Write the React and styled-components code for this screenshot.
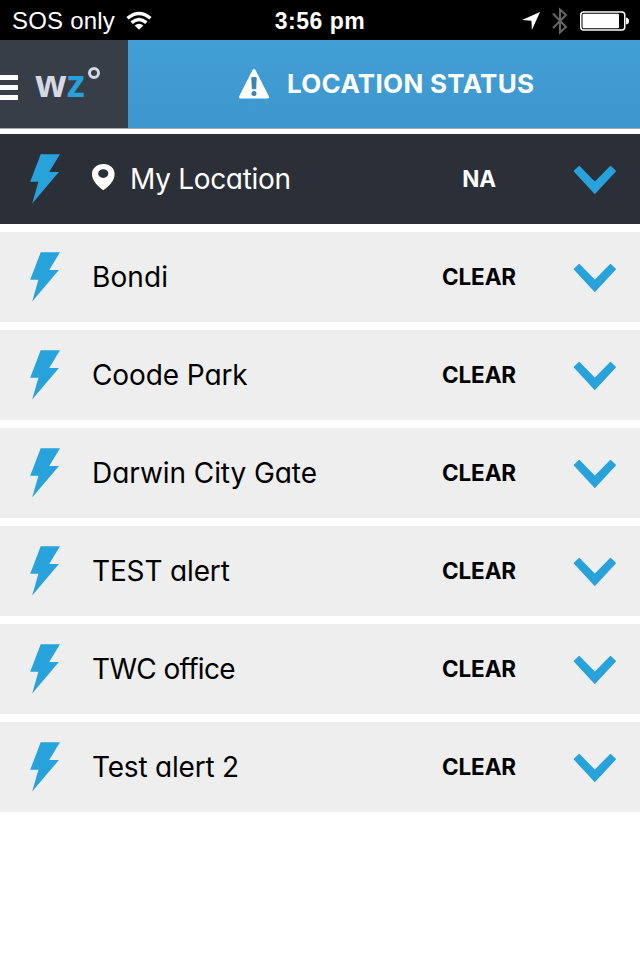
import React from "react";
import styled, { createGlobalStyle } from "styled-components";

const GlobalStyle = createGlobalStyle`
  * { box-sizing: border-box; }
  html, body { margin: 0; background: #fff; }
  svg { display: block; flex: none; }
`;

const Screen = styled.div`
  display: flex;
  flex-direction: column;
  width: 640px;
  height: 960px;
  overflow: hidden;
  background: #fff;
  font-family: Inter, "Liberation Sans", sans-serif;
`;

const StatusBar = styled.header`
  display: grid;
  grid-template-columns: 240px 160px 240px;
  align-items: center;
  height: 40px;
  background: #000;
  color: #fff;
  font-family: "Liberation Sans", sans-serif;
  font-size: 24px;
  line-height: 40px;
  white-space: nowrap;
`;

const Carrier = styled.div`
  display: flex;
  align-items: center;
  gap: 11px;
  padding-left: 12px;
  padding-top: 1px;
  letter-spacing: 0.2px;
`;

const Clock = styled.div`
  padding-top: 1px;
  text-align: center;
  font-weight: 700;
  font-size: 23px;
  letter-spacing: 0.5px;
`;

const Indicators = styled.div`
  display: flex;
  align-items: center;
  justify-content: flex-end;
  padding-right: 10px;
`;

const NavBar = styled.nav`
  display: flex;
  height: 94px;
  background: linear-gradient(#aaa, #aaa) 0 88px / 100% 1px no-repeat;
`;

const MenuButton = styled.div`
  display: flex;
  align-items: flex-start;
  width: 128px;
  height: 88px;
  background: #383e48;
`;

const MenuBars = styled.div`
  display: flex;
  flex-direction: column;
  gap: 5px;
  width: 18px;
  margin-top: 35px;
`;

const MenuBar = styled.span`
  height: 5px;
  background: #fff;
`;

const Logo = styled.div`
  display: flex;
  margin-left: 17px;
  color: #d5d9e6;
  font-family: "Open Sans", sans-serif;
  font-size: 37px;
  font-weight: 700;
  line-height: 50px;
  padding-top: 18px;
  letter-spacing: -1px;
`;

const LogoAccent = styled.span`
  margin-left: 1px;
  color: #27a2db;
`;

const LogoRing = styled.span`
  width: 12px;
  height: 12px;
  margin: 9px 0 0 4px;
  border: 3px solid #d5d9e6;
  border-radius: 50%;
`;

const TitleBar = styled.div`
  display: flex;
  flex: 1;
  height: 88px;
  padding: 28px 0 0 110px;
  background: linear-gradient(#429fd5, #3c97cd);
  color: #fff;
`;

const Title = styled.h1`
  margin: 0 0 0 17px;
  font-size: 26px;
  font-weight: 700;
  line-height: 32px;
  letter-spacing: 0.3px;
  white-space: nowrap;
`;

const List = styled.main`
  display: flex;
  flex-direction: column;
  gap: 8px;
`;

const Row = styled.div`
  display: grid;
  grid-template-columns: 92px 316px 142px 90px;
  height: 90px;
  background: ${(p) => (p.$current ? "#2b2f38" : "#eee")};
  color: ${(p) => (p.$current ? "#fff" : "#000")};
`;

const Place = styled.div`
  display: flex;
  align-items: flex-start;
  gap: 15px;
  white-space: nowrap;
`;

const PinSlot = styled.span`
  margin-top: 30px;
`;

const PlaceName = styled.span`
  font-size: 28px;
  font-weight: 400;
  line-height: 90px;
  letter-spacing: ${(p) => p.$tracking}px;
  font-feature-settings: "cv11" 1;
`;

const State = styled.div`
  padding-top: 1px;
  text-align: center;
  font-size: 22.5px;
  font-weight: 700;
  line-height: 88px;
  letter-spacing: -0.1px;
`;

const Wifi = () => (
  <svg width="26" height="20" viewBox="0 0 26 20" fill="none" stroke="#fff" strokeWidth="3.4">
    <path d="M1.5 7.2Q13-2.4 24.5 7.2" />
    <path d="M5.6 11.6Q13 5.2 20.4 11.6" />
    <path d="M13 18.8L8.6 14.6Q13 11 17.4 14.6Z" fill="#fff" stroke="none" />
  </svg>
);

const Arrow = () => (
  <svg width="18" height="18" viewBox="0 0 18 18">
    <path d="M18 0L9.9 18L9.4 8.7L0 8Z" fill="#fff" />
  </svg>
);

const BluetoothBox = styled.div`
  margin: 0 12px 0 12px;
`;

const Bluetooth = () => (
  <svg width="16" height="28" viewBox="0 0 16 28" fill="none" stroke="#666" strokeWidth="2">
    <path d="M1 6.5L14 20L8 25.5V2.5L14 8L1 21" />
  </svg>
);

const Battery = () => (
  <svg width="50" height="20" viewBox="0 0 50 20">
    <rect x="0.75" y="1" width="44" height="18" rx="3" fill="none" stroke="#fff" strokeWidth="1.5" />
    <rect x="2.5" y="2.7" width="36.5" height="14.6" rx="1" fill="#fff" />
    <path d="M46 6.5Q49 7 49 10T46 13.5Z" fill="#fff" />
  </svg>
);

const Warning = () => (
  <svg width="32" height="32" viewBox="0 0 32 32">
    <path d="M16 2.5L29.5 29H2.5Z" fill="#fff" stroke="#fff" strokeWidth="3" strokeLinejoin="round" />
    <path d="M13.8 9.6H18.2L17.7 20.8H14.3Z" fill="#3c83b2" stroke="#3c83b2" strokeWidth="1" />
    <circle cx="16" cy="25.5" r="2.5" fill="#3c83b2" />
  </svg>
);

const Bolt = () => (
  <svg width="92" height="90" viewBox="0 0 92 90">
    <path d="M40.7 20.3H60L49.2 38H58.9L32.2 69.5L38.4 47.8H30.2Z" fill="#27a2db" />
  </svg>
);

const Pin = () => (
  <svg width="23" height="27" viewBox="0 0 23 27">
    <path
      d="M11.5 0C4.7 0 0 4.3 0 10.2C0 17 6 22 11.3 26.3C16.8 22 22.6 17 22.6 10.2C22.6 4.3 18.2 0 11.5 0ZM11.3 5.3C14.3 5.3 16.3 7.2 16.3 9.6S14.3 13.9 11.3 13.9S6.2 12 6.2 9.6S8.2 5.3 11.3 5.3Z"
      fill="#fff"
      fillRule="evenodd"
    />
  </svg>
);

const Chevron = () => (
  <svg width="90" height="90" viewBox="0 0 90 90">
    <path
      d="M29.2 32.8L44.8 48.8L60.5 32.8L65 37.2L44.8 59L24.7 37.2Z"
      fill="#27a2db"
      stroke="#27a2db"
      strokeWidth="1.8"
      strokeLinejoin="round"
    />
  </svg>
);

const places = [
  { name: "My Location", state: "NA", current: true, tracking: -0.3 },
  { name: "Bondi", state: "CLEAR", tracking: 0.1 },
  { name: "Coode Park", state: "CLEAR", tracking: -0.1 },
  { name: "Darwin City Gate", state: "CLEAR", tracking: -0.07 },
  { name: "TEST alert", state: "CLEAR", tracking: -0.15 },
  { name: "TWC office", state: "CLEAR", tracking: -0.65 },
  { name: "Test alert 2", state: "CLEAR", tracking: -0.2 },
];

export default function App() {
  return (
    <Screen>
      <GlobalStyle />
      <StatusBar>
        <Carrier>
          SOS only
          <Wifi />
        </Carrier>
        <Clock>3:56 pm</Clock>
        <Indicators>
          <Arrow />
          <BluetoothBox>
            <Bluetooth />
          </BluetoothBox>
          <Battery />
        </Indicators>
      </StatusBar>
      <NavBar>
        <MenuButton>
          <MenuBars>
            <MenuBar />
            <MenuBar />
            <MenuBar />
          </MenuBars>
          <Logo>
            w<LogoAccent>z</LogoAccent>
            <LogoRing />
          </Logo>
        </MenuButton>
        <TitleBar>
          <Warning />
          <Title>LOCATION STATUS</Title>
        </TitleBar>
      </NavBar>
      <List>
        {places.map((place) => (
          <Row key={place.name} $current={place.current}>
            <Bolt />
            <Place>
              {place.current && (
                <PinSlot>
                  <Pin />
                </PinSlot>
              )}
              <PlaceName $tracking={place.tracking}>{place.name}</PlaceName>
            </Place>
            <State>{place.state}</State>
            <Chevron />
          </Row>
        ))}
      </List>
    </Screen>
  );
}
